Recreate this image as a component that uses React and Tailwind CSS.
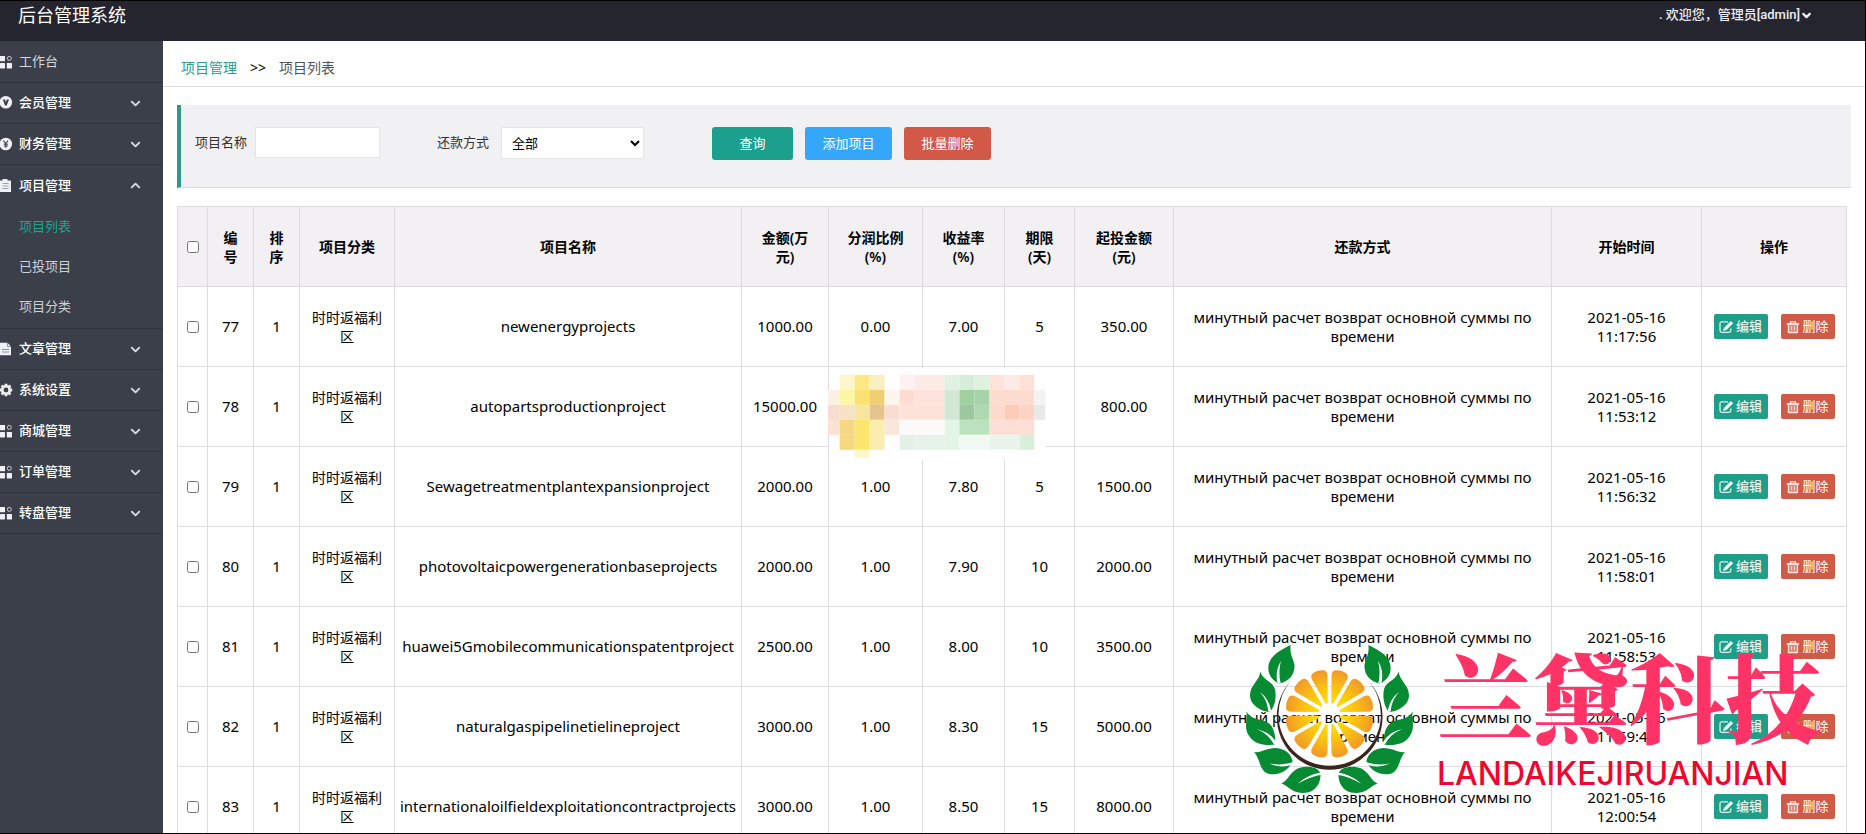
import React from "react";
import { ChevronDown, ChevronUp } from "lucide-react";

const GridIcon = () => (
  <svg viewBox="0 0 13 14" className="h-[14px] w-[13px] shrink-0" fill="#eef0f5" aria-hidden="true">
    <rect x="0" y="1" width="5" height="5.2" />
    <rect x="0" y="8" width="5" height="5.4" rx="0.6" />
    <rect x="6.8" y="8" width="5.2" height="5.4" rx="0.6" />
    <circle cx="9.3" cy="3.4" r="2" fill="none" stroke="#cdd0d8" strokeWidth="1" />
  </svg>
);

const VipIcon = () => (
  <svg viewBox="0 0 13 14" className="h-[14px] w-[13px] shrink-0" aria-hidden="true">
    <circle cx="5.8" cy="6.3" r="6.3" fill="#eef0f5" />
    <path d="M2.8 3.6h2.200l.9 2.600.9-2.600h2.200L6.700 9.400H5z" fill="#3b3f4a" />
  </svg>
);

const YenIcon = () => (
  <svg viewBox="0 0 13 14" className="h-[14px] w-[13px] shrink-0" aria-hidden="true">
    <circle cx="5.800" cy="7" r="6.300" fill="#eef0f5" />
    <path d="M3.500 3.500l2.300 3.200 2.300-3.200M5.800 6.700v4M3.800 7.200h4M3.800 9h4" fill="none" stroke="#3b3f4a" strokeWidth="1.100" />
  </svg>
);

const ClipboardIcon = () => (
  <svg viewBox="0 0 13 14" className="h-[14px] w-[13px] shrink-0" aria-hidden="true">
    <path d="M0 1.500h2.500V0h5v1.500H11V13H0z" fill="#eef0f5" />
    <path d="M2.500 4.500h6M2.500 7h6M2.500 9.500h6" stroke="#9ea2ab" strokeWidth="1" />
  </svg>
);

const FileIcon = () => (
  <svg viewBox="0 0 13 14" className="h-[14px] w-[13px] shrink-0" aria-hidden="true">
    <path d="M0 .8h7.500L11 4.500v8.700H0z" fill="#eef0f5" />
    <path d="M7.500.8v3.700H11M2 7.500h7M2 10h7" fill="none" stroke="#8d919b" strokeWidth="1" />
  </svg>
);

const GearIcon = () => (
  <svg viewBox="0 0 13 14" className="h-[14px] w-[13px] shrink-0" aria-hidden="true">
    <circle cx="6" cy="7" r="3.700" fill="none" stroke="#eef0f5" strokeWidth="2.600" />
    <path
      d="M6 .8v2M6 11.200v2M-.2 7h2M10.200 7h2M1.600 2.600L3 4M9 10l1.400 1.400M10.400 2.600L9 4M3 10l-1.400 1.400"
      stroke="#eef0f5"
      strokeWidth="2.800"
    />
  </svg>
);

const EditIcon = () => (
  <svg viewBox="0 0 15 14" className="h-[14px] w-[15px]" fill="none" stroke="#d5f3ec" aria-hidden="true">
    <path d="M9 1.800H2.800A1.800 1.800 0 0 0 1 3.600v7a1.800 1.800 0 0 0 1.800 1.800h7.200a1.800 1.800 0 0 0 1.800-1.800V8.500" strokeWidth="1.300" />
    <path d="M6.300 8.800L13 2.100" stroke="#f4fffc" strokeWidth="3.200" />
    <path d="M4 11l1-3.300L7.500 10z" fill="#f4fffc" stroke="none" />
  </svg>
);

const TrashIcon = () => (
  <svg viewBox="0 0 14 14" className="h-[14px] w-[14px]" fill="none" stroke="#ffe3dc" strokeWidth="1.300" aria-hidden="true">
    <path d="M2.500 4h9v8.500h-9z" fill="#dd8878" />
    <path d="M.8 4h12.400M4.500 4V1.800h5V4" />
    <path d="M5.500 6.500v3.500M8.500 6.500v3.500" strokeWidth="1" />
  </svg>
);

const menuTop = [
  { label: "会员管理", Icon: VipIcon },
  { label: "财务管理", Icon: YenIcon },
  { label: "项目管理", Icon: ClipboardIcon, open: true },
];
const submenu = ["项目列表", "已投项目", "项目分类"];
const menuBottom = [
  { label: "文章管理", Icon: FileIcon },
  { label: "系统设置", Icon: GearIcon },
  { label: "商城管理", Icon: GridIcon },
  { label: "订单管理", Icon: GridIcon },
  { label: "转盘管理", Icon: GridIcon },
];

function MenuItem({ label, Icon, open }) {
  const Arrow = open ? ChevronUp : ChevronDown;
  return (
    <li>
      <button
        type="button"
        aria-expanded={!!open}
        className={`flex h-[41px] w-full items-center gap-[6px] pr-5 text-[13px] font-medium text-white ${open ? "" : "border-b border-[#30343e]"}`}
      >
        <Icon />
        <span className="flex-1 text-left">{label}</span>
        <Arrow size={15} strokeWidth={3} color="#d9dbe1" />
      </button>
    </li>
  );
}

const rows = [
  ["77", "newenergyprojects", "1000.00", "0.00", "7.00", "5", "350.00", "11:17:56"],
  ["78", "autopartsproductionproject", "15000.00", "", "", "", "800.00", "11:53:12"],
  ["79", "Sewagetreatmentplantexpansionproject", "2000.00", "1.00", "7.80", "5", "1500.00", "11:56:32"],
  ["80", "photovoltaicpowergenerationbaseprojects", "2000.00", "1.00", "7.90", "10", "2000.00", "11:58:01"],
  ["81", "huawei5Gmobilecommunicationspatentproject", "2500.00", "1.00", "8.00", "10", "3500.00", "11:58:53"],
  ["82", "naturalgaspipelinetielineproject", "3000.00", "1.00", "8.30", "15", "5000.00", "11:59:43"],
  ["83", "internationaloilfieldexploitationcontractprojects", "3000.00", "1.00", "8.50", "15", "8000.00", "12:00:54"],
];

const headings = [
  ["编", "号"],
  ["排", "序"],
  ["项目分类"],
  ["项目名称"],
  ["金额(万", "元)"],
  ["分润比例", "(%)"],
  ["收益率", "(%)"],
  ["期限", "(天)"],
  ["起投金额", "(元)"],
  ["还款方式"],
  ["开始时间"],
  ["操作"],
];

const cell = "border border-[#dcdce0] p-0 text-center";

const mosaic = [
  [180, 45, 45, 45, "#fdf6cd"], [225, 45, 45, 45, "#fae984"], [270, 45, 45, 45, "#fbeec0"],
  [145, 90, 35, 45, "#fbf0e6"], [180, 90, 45, 45, "#fdf5a6"], [225, 90, 45, 45, "#f9e272"], [270, 90, 45, 45, "#f0cf74"], [315, 90, 45, 45, "#fdf5ee"],
  [145, 135, 35, 45, "#f6ddd0"], [180, 135, 45, 45, "#f7e2c8"], [225, 135, 45, 45, "#f8e6a0"], [270, 135, 45, 45, "#e6c48f"], [315, 135, 45, 45, "#f7ddd2"],
  [145, 180, 35, 45, "#fae3d4"], [180, 180, 45, 45, "#f8d784"], [225, 180, 45, 90, "#fbe56f"], [270, 180, 45, 90, "#faedb0"], [315, 180, 45, 45, "#fae6da"],
  [180, 225, 45, 45, "#f7d780"], [225, 270, 45, 25, "#fdf8c8"],
  [360, 45, 45, 45, "#fef2f0"], [405, 45, 90, 45, "#fdebe6"], [360, 90, 45, 45, "#fddcd2"], [405, 90, 90, 45, "#fde3db"],
  [360, 135, 135, 45, "#fde2da"], [360, 180, 135, 45, "#fefaf9"], [360, 225, 45, 45, "#e3f0e6"], [405, 225, 90, 45, "#e6f3e9"],
  [495, 45, 45, 45, "#e0f3e2"], [495, 90, 45, 90, "#d2e8d4"], [495, 180, 45, 90, "#e3f5e5"],
  [540, 45, 45, 45, "#d8eedb"], [585, 45, 45, 45, "#def2e0"], [540, 90, 45, 45, "#a0cfa1"], [585, 90, 45, 45, "#a6d3a8"],
  [540, 135, 45, 45, "#9dc79f"], [585, 135, 45, 45, "#aed8b1"], [540, 180, 90, 45, "#bbe2bf"], [540, 225, 90, 45, "#f2f9f3"],
  [630, 45, 45, 45, "#fde3da"], [675, 45, 45, 45, "#fdece6"], [720, 45, 45, 45, "#fde1d8"], [630, 90, 135, 45, "#fddbcf"],
  [630, 135, 45, 45, "#fddacc"], [675, 135, 45, 45, "#fdccb8"], [720, 135, 45, 45, "#fdd3c3"], [630, 180, 135, 45, "#fddfd5"],
  [630, 225, 90, 45, "#eaf4ec"], [720, 225, 45, 45, "#d8efdc"], [765, 90, 33, 45, "#f3f3f3"], [765, 135, 33, 45, "#e9e9e9"],
];

const Leaves = () => (
  <g>
    <g fill="#068a32">
      <path d="M185 42C152 58 117 78 118 112C118 135 134 150 149 158C178 153 197 133 197 105C196 86 181 72 185 42Z" />
      <path d="M94 122C92 150 62 163 63 195C64 222 95 240 122 244C139 228 143 196 138 175C131 150 102 150 94 122Z" />
      <path d="M52 242C56 268 42 292 62 318C80 344 115 345 138 341C142 320 135 285 115 274C95 264 66 268 52 242Z" />
      <path d="M75 364C95 368 110 352 140 352C172 353 188 375 191 391C178 422 150 434 122 430C90 424 94 382 75 364Z" />
      <path d="M157 458C180 452 185 408 232 408C258 408 272 416 275 430C276 455 262 487 222 487C190 488 178 466 157 458Z" />
    </g>
    <g fill="#fff">
      <path d="M146 158C140 132 144 110 156 90C150 112 150 134 155 157Z" />
      <path d="M118 243C116 216 107 199 92 183C111 196 122 214 127 242Z" />
      <path d="M136 342C122 317 107 304 83 295C111 300 129 314 141 334Z" />
      <path d="M193 394C168 402 146 403 121 398C146 410 170 409 192 401Z" />
      <path d="M276 425C248 430 227 440 207 459C229 446 250 437 277 432Z" />
    </g>
  </g>
);

function Emblem() {
  const slices = Array.from({ length: 12 }, (_, i) => 15 + i * 30);
  return (
    <svg viewBox="40 36 524 460" className="h-[153px] w-[175px] shrink-0" aria-hidden="true">
      <defs>
        <radialGradient id="citrusSlice" gradientUnits="userSpaceOnUse" cx="0" cy="0" r="136">
          <stop offset="0.2" stopColor="#ffe400" />
          <stop offset="0.6" stopColor="#fbc013" />
          <stop offset="1" stopColor="#f0962a" />
        </radialGradient>
      </defs>
      {slices.map((a) => (
        <path
          key={a}
          transform={`translate(302 249) rotate(${a})`}
          d="M36 0L113 20Q126 23 128 13Q132 0 128 -13Q126 -23 113 -20Z"
          fill="url(#citrusSlice)"
          stroke="url(#citrusSlice)"
          strokeWidth="8"
          strokeLinejoin="round"
        />
      ))}
      <path d="M190 146A159 159 0 1 0 415 146A154 154 0 1 1 190 146Z" fill="#3a241c" />
      <Leaves />
      <g transform="translate(604 0) scale(-1 1)">
        <Leaves />
      </g>
    </svg>
  );
}

export default function App() {
  return (
    <div className="relative flex h-screen flex-col overflow-hidden border-y border-r border-black bg-white font-['Noto_Sans','Noto_Sans_CJK_SC',sans-serif] text-black">
      <header className="flex h-10 shrink-0 items-start justify-between bg-[#25252f] pl-[18px] pr-[52px]">
        <h1 className="text-[18px] leading-7 text-white">后台管理系统</h1>
        <button
          type="button"
          className="flex h-7 items-center font-['Roboto','Noto_Sans_CJK_SC',sans-serif] text-[13px] font-medium text-[#eceef4]"
        >
          . 欢迎您，管理员[admin]
          <ChevronDown size={13} strokeWidth={4} />
        </button>
      </header>

      <div className="flex min-h-0 flex-1">
        <nav className="w-[163px] shrink-0 bg-[#3b3f4a] pt-px">
          <ul>
            <li>
              <a href="#workbench" className="flex h-[41px] items-center gap-[6px] border-b border-[#30343e] text-[13px] text-[#d5d7de]">
                <GridIcon />
                工作台
              </a>
            </li>
            {menuTop.map((m) => (
              <MenuItem key={m.label} {...m} />
            ))}
            <li>
              <ul className="border-b border-[#30343e] py-px">
                {submenu.map((s, i) => (
                  <li key={s}>
                    <a
                      href={`#sub-${i}`}
                      className={`flex h-10 items-center pl-[19px] text-[13px] ${i === 0 ? "text-[#1fa58d]" : "text-[#cfd1d8]"}`}
                    >
                      {s}
                    </a>
                  </li>
                ))}
              </ul>
            </li>
            {menuBottom.map((m) => (
              <MenuItem key={m.label} {...m} />
            ))}
          </ul>
        </nav>

        <main className="min-w-0 flex-1 overflow-hidden">
          <div className="flex h-[46px] items-center gap-[13px] border-b border-[#dedede] pl-[18px] pt-2 text-[14px]">
            <a href="#projects" className="text-[#2a9d8c]">项目管理</a>
            <span>&gt;&gt;</span>
            <span className="text-[#555]">项目列表</span>
          </div>

          <form
            className="mx-[14px] mt-[18px] flex h-[83px] items-start border-b border-l-4 border-b-[#dcdce0] border-l-[#2f9a89] bg-[#f1f0f2] pl-[14px] pt-[22px] text-[13px] text-[#333]"
            onSubmit={(e) => e.preventDefault()}
          >
            <label htmlFor="name" className="mr-2 leading-[31px]">项目名称</label>
            <input id="name" type="text" className="h-[31px] w-[125px] border border-[#e6e6e6] bg-white px-2 outline-none" />
            <label htmlFor="pay" className="ml-[57px] mr-3 leading-[31px]">还款方式</label>
            <select id="pay" className="h-[32px] w-[143px] border border-[#e6e6e6] bg-white pl-[6px] text-[13px] text-black outline-none">
              <option>全部</option>
            </select>
            <div className="ml-[68px] flex gap-3 text-white">
              <button type="submit" className="h-[33px] w-[81px] rounded-[3px] bg-[#1aa08c]">查询</button>
              <button type="button" className="h-[33px] w-[87px] rounded-[3px] bg-[#34a7fb]">添加项目</button>
              <button type="button" className="h-[33px] w-[87px] rounded-[3px] bg-[#d25848]">批量删除</button>
            </div>
          </form>

          <div className="relative ml-[14px] mr-[18px] mt-[18px]">
            <table className="w-full table-fixed border-collapse text-[15px] leading-[19px]">
              <colgroup>
                <col className="w-[30px]" />
                <col className="w-[46px]" />
                <col className="w-[46px]" />
                <col className="w-[95px]" />
                <col className="w-[347px]" />
                <col className="w-[87px]" />
                <col className="w-[94px]" />
                <col className="w-[82px]" />
                <col className="w-[70px]" />
                <col className="w-[99px]" />
                <col className="w-[378px]" />
                <col className="w-[150px]" />
                <col className="w-[145px]" />
              </colgroup>
              <thead>
                <tr className="h-20 bg-[#f2f0f3] text-[14px]">
                  <th className={cell}>
                    <input type="checkbox" aria-label="全选" className="mx-auto block h-3 w-3" />
                  </th>
                  {headings.map((lines) => (
                    <th key={lines.join("")} className={`${cell} font-semibold`}>
                      {lines.map((l) => (
                        <div key={l}>{l}</div>
                      ))}
                    </th>
                  ))}
                </tr>
              </thead>
              <tbody>
                {rows.map(([id, name, amount, share, rate, days, min, time]) => (
                  <tr key={id} className="h-20">
                    <td className={cell}>
                      <input type="checkbox" aria-label={id} className="mx-auto block h-3 w-3" />
                    </td>
                    <td className={cell}>{id}</td>
                    <td className={cell}>1</td>
                    <td className={`${cell} px-2 text-[14px]`}>时时返福利区</td>
                    <td className={cell}>{name}</td>
                    <td className={cell}>{amount}</td>
                    <td className={cell}>{share}</td>
                    <td className={cell}>{rate}</td>
                    <td className={cell}>{days}</td>
                    <td className={cell}>{min}</td>
                    <td className={`${cell} px-4`}>минутный расчет возврат основной суммы по времени</td>
                    <td className={cell}>
                      <div>2021-05-16</div>
                      <div>{time}</div>
                    </td>
                    <td className={cell}>
                      <div className="flex justify-center gap-[13px] text-[13px] text-white">
                        <button type="button" className="flex h-[25px] w-[54px] items-center justify-center gap-[2px] rounded-[2px] bg-[#1f9f89]">
                          <EditIcon />
                          编辑
                        </button>
                        <button type="button" className="flex h-[25px] w-[54px] items-center justify-center gap-[2px] rounded-[2px] bg-[#d05a47]">
                          <TrashIcon />
                          删除
                        </button>
                      </div>
                    </td>
                  </tr>
                ))}
              </tbody>
            </table>

            <svg viewBox="145 25 655 275" className="absolute left-[651px] top-[162px] h-[92px] w-[218px]" aria-hidden="true">
              <rect x="148" y="36" width="652" height="240" fill="#fefefe" />
              <rect x="360" y="25" width="440" height="275" fill="#fefefe" />
              {mosaic.map(([x, y, w, h, c]) => (
                <rect key={`${x}-${y}`} x={x} y={y} width={w} height={h} fill={c} />
              ))}
            </svg>
          </div>
        </main>
      </div>

      <div className="pointer-events-none absolute bottom-[37px] right-[40px] flex items-end gap-5">
        <Emblem />
        <div className="w-[388px] whitespace-nowrap">
          <div className="mb-2 font-['Noto_Serif_CJK_SC','Noto_Sans_CJK_SC',sans-serif] text-[96px] font-black leading-[100px] text-[#ff3366]">兰黛科技</div>
          <div className="font-['Inter',sans-serif] text-[32px] font-medium leading-[44px] text-[#f0052f]">LANDAIKEJIRUANJIAN</div>
        </div>
      </div>
    </div>
  );
}
